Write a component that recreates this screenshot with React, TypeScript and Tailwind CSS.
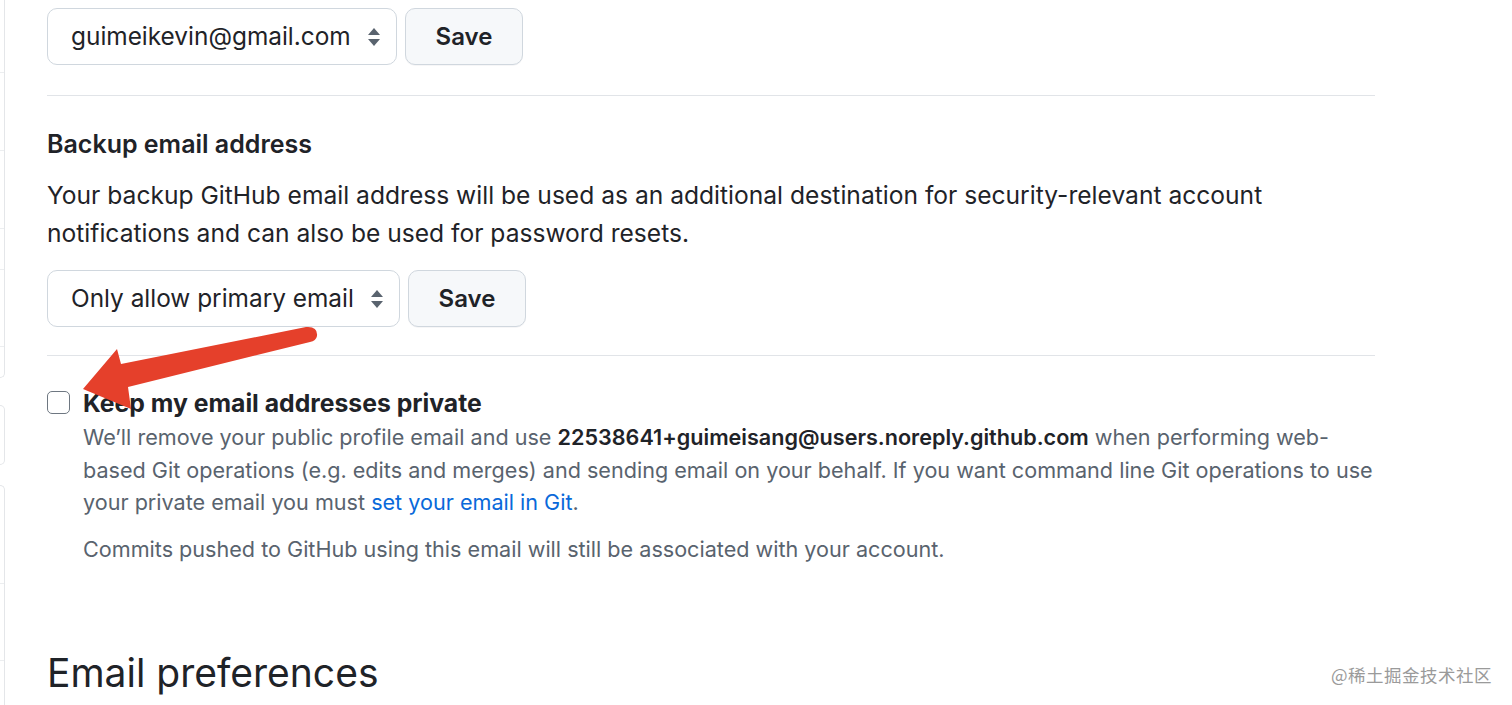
import type { ReactNode } from "react";

function SelectBox({ children, width }: { children: ReactNode; width: string }) {
	return (
		<div className={`${width} h-[57px] rounded-[10px] border border-[#d0d7de] bg-white flex items-center justify-between pl-[23px] pr-[14px] text-[24.4px] text-[#1f2328]`}>
			<span>{children}</span>
			<svg width="16" height="22" viewBox="0 0 16 22" className="text-[#59636e]">
				<path d="M8 2 L14 9 H2 Z" fill="currentColor" />
				<path d="M8 20 L14 13 H2 Z" fill="currentColor" />
			</svg>
		</div>
	);
}

function SaveButton() {
	return (
		<button
			type="button"
			className="w-[118px] h-[57px] rounded-[10px] border border-[#d0d7de] bg-[#f6f8fa] text-[24px] font-semibold text-[#1f2328] shadow-[0_1px_0_rgba(31,35,40,0.04)]"
		>
			Save
		</button>
	);
}

// the cut-off settings sidebar on the far left
function SidebarSliver() {
	return (
		<div className="w-[5px] shrink-0 flex flex-col">
			<div className="h-[413px] border-r border-b border-[#e4e6e9] rounded-br-[6px] flex flex-col">
				<div className="h-[73px] border-b border-[#eceef0]" />
				<div className="h-[78px] border-b border-[#eceef0]" />
				<div className="h-[78px] border-b border-[#eceef0]" />
				<div className="h-[41px] border-b border-[#eceef0]" />
				<div className="h-[77px] border-b border-[#eceef0]" />
			</div>
			<div className="mt-[27px] h-[65px] border border-l-0 border-[#e4e6e9] rounded-r-[6px]" />
			<div className="mt-[20px] h-[240px] border border-l-0 border-b-0 border-[#e4e6e9] rounded-tr-[6px] flex flex-col">
				<div className="h-[98px] border-b border-[#eceef0]" />
				<div className="h-[77px] border-b border-[#eceef0]" />
			</div>
		</div>
	);
}

export default function App() {
	return (
		<div className="w-[1512px] h-[705px] overflow-hidden bg-white relative flex font-['Inter','Liberation_Sans',sans-serif] text-[#1f2328]">
			<SidebarSliver />

			<div className="ml-[42px] w-[1328px] flex flex-col pt-[8px]">
				<div className="flex gap-[8px]">
					<SelectBox width="w-[350px]">guimeikevin@gmail.com</SelectBox>
					<SaveButton />
				</div>

				<div className="mt-[30px] h-px bg-[#e1e4e8]" />

				<h3 className="mt-[33px] text-[25px] font-semibold leading-[30px]">Backup email address</h3>
				<p className="mt-[17px] text-[24.6px] leading-[38px]">
					Your backup GitHub email address will be used as an additional destination for security-relevant account
					<br />
					notifications and can also be used for password resets.
				</p>

				<div className="mt-[18px] flex gap-[8px]">
					<SelectBox width="w-[353px]">Only allow primary email</SelectBox>
					<SaveButton />
				</div>

				<div className="mt-[28px] h-px bg-[#e1e4e8]" />

				<div className="mt-[34px] flex gap-[13px]">
					<div className="mt-[1px] w-[23px] h-[23px] shrink-0 rounded-[5px] border-[1.5px] border-[#6e7781] bg-white" />
					<div className="flex flex-col">
						<div className="text-[24.75px] font-bold leading-[26px]">Keep my email addresses private</div>
						<p className="mt-[5px] text-[21.6px] leading-[32.5px] text-[#59636e]">
							We’ll remove your public profile email and use{" "}
							<b className="text-[#1f2328] font-semibold">22538641+guimeisang@users.noreply.github.com</b> when performing web-
							<br />
							based Git operations (e.g. edits and merges) and sending email on your behalf. If you want command line Git operations to use
							<br />
							your private email you must <a className="text-[#0969da]">set your email in Git</a>.
						</p>
						<p className="mt-[14px] text-[21.6px] leading-[32px] text-[#59636e]">
							Commits pushed to GitHub using this email will still be associated with your account.
						</p>
					</div>
				</div>

				<h2 className="mt-[83px] text-[39px] font-normal leading-[50px]">Email preferences</h2>
			</div>

			{/* annotation arrow */}
			<svg className="absolute left-0 top-0 pointer-events-none" width="1512" height="705">
				<path
					d="M83 389 L117 349 L121 364 L306 327 Q318 326 317 336 Q316 341 310 342 L128 387 L131 409 Z"
					fill="#e5402b"
				/>
			</svg>

			<div className="absolute right-[20px] top-[662px] text-[17.5px] text-[#9a9a9a] font-['Noto_Sans_CJK_SC',sans-serif] tracking-[0.5px]">
				@稀土掘金技术社区
			</div>
		</div>
	);
}
